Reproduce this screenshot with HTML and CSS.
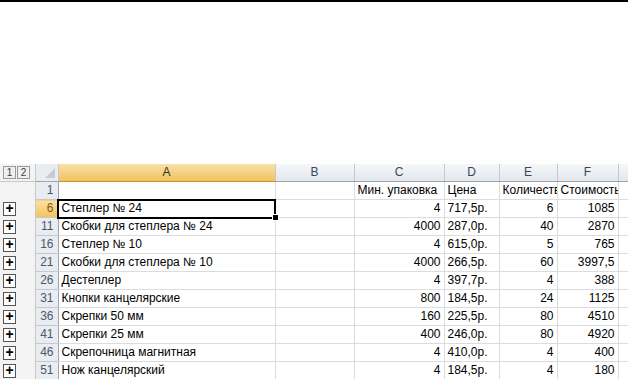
FILE: index.html
```html
<!DOCTYPE html>
<html lang="ru">
<head>
    <meta charset="UTF-8">
    <meta name="viewport" content="width=device-width, initial-scale=1.0">
    <title>Канцтовары</title>
    <link rel="stylesheet" href="styles.css">
</head>
<body>
    <div class="topline"></div>
    <div class="sheet-wrap">
        <table class="sheet">
            <colgroup>
                <col class="c-gutter">
                <col class="c-rowhdr">
                <col class="c-a">
                <col class="c-b">
                <col class="c-c">
                <col class="c-d">
                <col class="c-e">
                <col class="c-f">
                <col class="c-g">
            </colgroup>
            <tr class="hdr">
                <td class="gutter gutter-top"><span class="lvl">1</span><span class="lvl">2</span></td>
                <td class="corner"><span class="tri"></span></td>
                <td class="colhdr active">A</td>
                <td class="colhdr">B</td>
                <td class="colhdr">C</td>
                <td class="colhdr">D</td>
                <td class="colhdr">E</td>
                <td class="colhdr">F</td>
                <td class="colhdr"></td>
            </tr>
            <tr>
                <td class="gutter"></td>
                <td class="rowhdr">1</td>
                <td></td>
                <td></td>
                <td>Мин. упаковка</td>
                <td>Цена</td>
                <td class="clip">Количество</td>
                <td>Стоимость</td>
                <td></td>
            </tr>
            <tr>
                <td class="gutter"><span class="plus">+</span></td>
                <td class="rowhdr active">6</td>
                <td class="selected">Степлер № 24<span class="handle"></span></td>
                <td></td>
                <td class="num">4</td>
                <td>717,5р.</td>
                <td class="num">6</td>
                <td class="num">1085</td>
                <td></td>
            </tr>
            <tr>
                <td class="gutter"><span class="plus">+</span></td>
                <td class="rowhdr">11</td>
                <td>Скобки для степлера № 24</td>
                <td></td>
                <td class="num">4000</td>
                <td>287,0р.</td>
                <td class="num">40</td>
                <td class="num">2870</td>
                <td></td>
            </tr>
            <tr>
                <td class="gutter"><span class="plus">+</span></td>
                <td class="rowhdr">16</td>
                <td>Степлер № 10</td>
                <td></td>
                <td class="num">4</td>
                <td>615,0р.</td>
                <td class="num">5</td>
                <td class="num">765</td>
                <td></td>
            </tr>
            <tr>
                <td class="gutter"><span class="plus">+</span></td>
                <td class="rowhdr">21</td>
                <td>Скобки для степлера № 10</td>
                <td></td>
                <td class="num">4000</td>
                <td>266,5р.</td>
                <td class="num">60</td>
                <td class="num">3997,5</td>
                <td></td>
            </tr>
            <tr>
                <td class="gutter"><span class="plus">+</span></td>
                <td class="rowhdr">26</td>
                <td>Дестеплер</td>
                <td></td>
                <td class="num">4</td>
                <td>397,7р.</td>
                <td class="num">4</td>
                <td class="num">388</td>
                <td></td>
            </tr>
            <tr>
                <td class="gutter"><span class="plus">+</span></td>
                <td class="rowhdr">31</td>
                <td>Кнопки канцелярские</td>
                <td></td>
                <td class="num">800</td>
                <td>184,5р.</td>
                <td class="num">24</td>
                <td class="num">1125</td>
                <td></td>
            </tr>
            <tr>
                <td class="gutter"><span class="plus">+</span></td>
                <td class="rowhdr">36</td>
                <td>Скрепки 50 мм</td>
                <td></td>
                <td class="num">160</td>
                <td>225,5р.</td>
                <td class="num">80</td>
                <td class="num">4510</td>
                <td></td>
            </tr>
            <tr>
                <td class="gutter"><span class="plus">+</span></td>
                <td class="rowhdr">41</td>
                <td>Скрепки 25 мм</td>
                <td></td>
                <td class="num">400</td>
                <td>246,0р.</td>
                <td class="num">80</td>
                <td class="num">4920</td>
                <td></td>
            </tr>
            <tr>
                <td class="gutter"><span class="plus">+</span></td>
                <td class="rowhdr">46</td>
                <td>Скрепочница магнитная</td>
                <td></td>
                <td class="num">4</td>
                <td>410,0р.</td>
                <td class="num">4</td>
                <td class="num">400</td>
                <td></td>
            </tr>
            <tr>
                <td class="gutter"><span class="plus">+</span></td>
                <td class="rowhdr">51</td>
                <td>Нож канцелярский</td>
                <td></td>
                <td class="num">4</td>
                <td>184,5р.</td>
                <td class="num">4</td>
                <td class="num">180</td>
                <td></td>
            </tr>
            <tr>
                <td class="gutter"></td>
                <td class="rowhdr"></td>
                <td></td>
                <td></td>
                <td></td>
                <td></td>
                <td></td>
                <td></td>
                <td></td>
            </tr>
        </table>
    </div>
</body>
</html>
```

FILE: styles.css
```css
html, body {
    margin: 0;
    padding: 0;
    background-color: #fff;
    overflow: hidden;
    height: 379px;
}

body {
    font-family: "Liberation Sans", Arial, sans-serif;
    font-size: 12px;
    color: #000;
}

.topline {
    height: 2px;
    background-color: #000;
}

.sheet-wrap {
    padding-top: 162px;
}

.sheet {
    border-collapse: collapse;
    table-layout: fixed;
    width: 628px;
}

.c-gutter { width: 35px; }
.c-rowhdr { width: 23px; }
.c-a { width: 217px; }
.c-b { width: 79px; }
.c-c { width: 90px; }
.c-d { width: 55px; }
.c-e { width: 58px; }
.c-f { width: 61px; }
.c-g { width: 10px; }

.sheet td {
    height: 17px;
    padding: 0 3px;
    border-right: 1px solid #dadcdd;
    border-bottom: 1px solid #dadcdd;
    white-space: nowrap;
    overflow: hidden;
    vertical-align: middle;
    line-height: 17px;
}

.sheet td.num {
    text-align: right;
}

.sheet td.clip {
    padding-right: 0;
    text-overflow: clip;
}

.sheet td.gutter {
    background-color: #f3f3f3;
    border-right: 1px solid #c8c8c8;
    border-bottom: none;
    padding: 0 0 0 3px;
}

.gutter-top {
    border-bottom: 1px solid #c8c8c8 !important;
}

.lvl {
    display: inline-block;
    width: 11px;
    height: 11px;
    margin-right: 1px;
    border: 1px solid #9a9a9a;
    background-color: #eef0f3;
    color: #3c3c3c;
    font-size: 10px;
    line-height: 11px;
    text-align: center;
    vertical-align: middle;
}

.plus {
    display: inline-block;
    width: 11px;
    height: 12px;
    border: 1px solid #555;
    background-color: #fff;
    color: #000;
    font-size: 14px;
    font-weight: bold;
    line-height: 11px;
    text-align: center;
    vertical-align: middle;
}

.sheet td.corner {
    background-color: #e9ecf0;
    border-right: 1px solid #c5c9cf;
    border-bottom: 1px solid #9fa5ad;
    position: relative;
}

.tri {
    position: absolute;
    right: 3px;
    bottom: 3px;
    width: 0;
    height: 0;
    border-left: 10px solid transparent;
    border-bottom: 10px solid #c8ccd2;
}

.sheet td.colhdr {
    background: linear-gradient(#f5f7f9, #e3e7ec);
    border-right: 1px solid #c5c9cf;
    border-bottom: 1px solid #9fa5ad;
    text-align: center;
    color: #3a4658;
}

.sheet td.colhdr.active {
    background: linear-gradient(#f9e0a8, #f2c25d);
    border-bottom: 1px solid #c29437;
    color: #3a3020;
}

.sheet td.rowhdr {
    background-color: #e9ecf0;
    border-right: 1px solid #9fa5ad;
    border-bottom: 1px solid #c5c9cf;
    text-align: right;
    padding: 0 4px 0 0;
    color: #4c5869;
}

.sheet td.rowhdr.active {
    background: linear-gradient(#f9e0a8, #f2c25d);
    color: #8a5400;
}

.sheet td.selected {
    position: relative;
    outline: 2px solid #000;
    outline-offset: -1px;
    overflow: visible;
}

.handle {
    position: absolute;
    right: -4px;
    bottom: -4px;
    width: 5px;
    height: 5px;
    background-color: #000;
    border: 1px solid #fff;
}
```
